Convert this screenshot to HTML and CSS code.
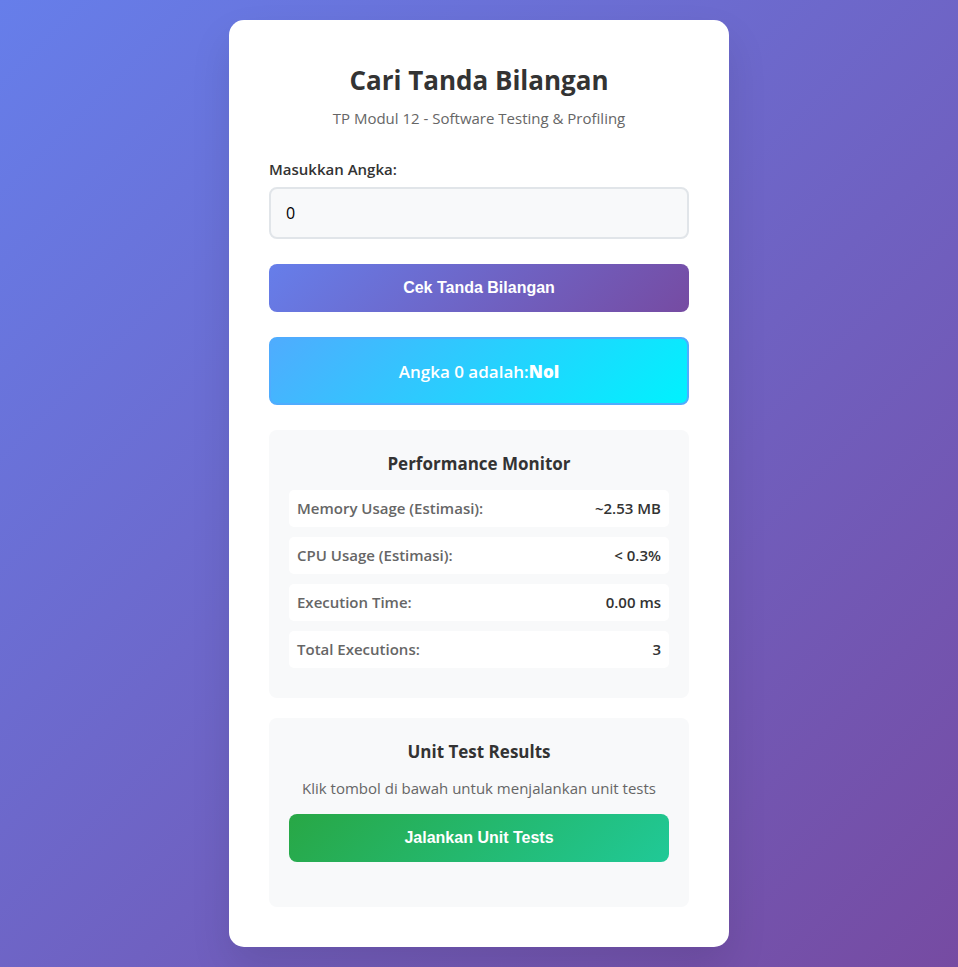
FILE: index.html
```html
<!DOCTYPE html>
<html lang="id">
<head>
<meta charset="utf-8">
<meta name="viewport" content="width=device-width, initial-scale=1">
<title>Cari Tanda Bilangan</title>
<link rel="stylesheet" href="styles.css">
</head>
<body>
<main class="container">
  <header class="header">
    <h1>Cari Tanda Bilangan</h1>
    <p>TP Modul 12 - Software Testing &amp; Profiling</p>
  </header>
  <form class="form">
    <label for="angka">Masukkan Angka:</label>
    <input id="angka" type="text" inputmode="numeric" value="0">
    <button class="btn" type="button">Cek Tanda Bilangan</button>
  </form>
  <div class="result">Angka 0 adalah:<strong>Nol</strong></div>
  <section class="panel monitor">
    <h2>Performance Monitor</h2>
    <dl>
      <div class="metric"><dt>Memory Usage (Estimasi):</dt><dd>~2.53 MB</dd></div>
      <div class="metric"><dt>CPU Usage (Estimasi):</dt><dd>&lt; 0.3%</dd></div>
      <div class="metric"><dt>Execution Time:</dt><dd>0.00 ms</dd></div>
      <div class="metric"><dt>Total Executions:</dt><dd>3</dd></div>
    </dl>
  </section>
  <section class="panel tests">
    <h2>Unit Test Results</h2>
    <p>Klik tombol di bawah untuk menjalankan unit tests</p>
    <button class="btn btn-green" type="button">Jalankan Unit Tests</button>
  </section>
</main>
</body>
</html>
```
FILE: styles.css
```css
* {
  box-sizing: border-box;
  margin: 0;
  padding: 0;
}

body {
  min-height: 100vh;
  padding: 20px;
  display: flex;
  justify-content: center;
  align-items: center;
  font-family: "Segoe UI", "Open Sans", "Noto Sans", sans-serif;
  font-size: 15px;
  line-height: 21px;
  color: #333;
  background: linear-gradient(135deg, #667eea 0%, #764ba2 100%);
}

.container {
  width: 100%;
  max-width: 500px;
  padding: 40px;
  background: #fff;
  border-radius: 15px;
  box-shadow: 0 20px 40px rgba(0, 0, 0, 0.1);
}

.header {
  margin-bottom: 30px;
  text-align: center;
}

.header h1 {
  margin-bottom: 8px;
  font-size: 26px;
  font-weight: 700;
  line-height: 40px;
}

.header p,
.tests p {
  color: #666;
}

.form label {
  display: block;
  margin-bottom: 7px;
  font-weight: 600;
}

.form input {
  display: block;
  width: 100%;
  height: 52px;
  margin-bottom: 25px;
  padding: 0 15px;
  border: 2px solid #e1e5e9;
  border-radius: 8px;
  background: #f8f9fa;
  font-family: inherit;
  font-size: 16px;
  color: #000;
}

.btn {
  display: block;
  width: 100%;
  height: 48px;
  border: none;
  border-radius: 8px;
  background: linear-gradient(135deg, #667eea 0%, #764ba2 100%);
  font-family: Arial, "Liberation Sans", sans-serif;
  font-size: 16px;
  font-weight: 600;
  color: #fff;
  cursor: pointer;
}

.btn-green {
  background: linear-gradient(135deg, #28a745 0%, #20c997 100%);
}

.result {
  display: flex;
  justify-content: center;
  align-items: center;
  min-height: 68px;
  margin: 25px 0;
  border: 2px solid #4facfe;
  border-radius: 8px;
  background: linear-gradient(135deg, #4facfe 0%, #00f2fe 100%);
  font-size: 17px;
  font-weight: 600;
  color: #fff;
}

.result strong {
  font-weight: 800;
}

.panel {
  padding: 20px;
  border-radius: 8px;
  background: #f8f9fa;
}

.panel h2 {
  margin-bottom: 13px;
  font-size: 17px;
  font-weight: 700;
  line-height: 27px;
  text-align: center;
}

.monitor {
  margin-bottom: 20px;
}

.metric {
  display: flex;
  justify-content: space-between;
  margin-bottom: 10px;
  padding: 8px;
  border-radius: 5px;
  background: #fff;
  font-weight: 600;
}

.metric dt {
  color: #666;
}

.tests p {
  margin-bottom: 15px;
  text-align: center;
}

.tests .btn {
  margin-bottom: 25px;
}
```
